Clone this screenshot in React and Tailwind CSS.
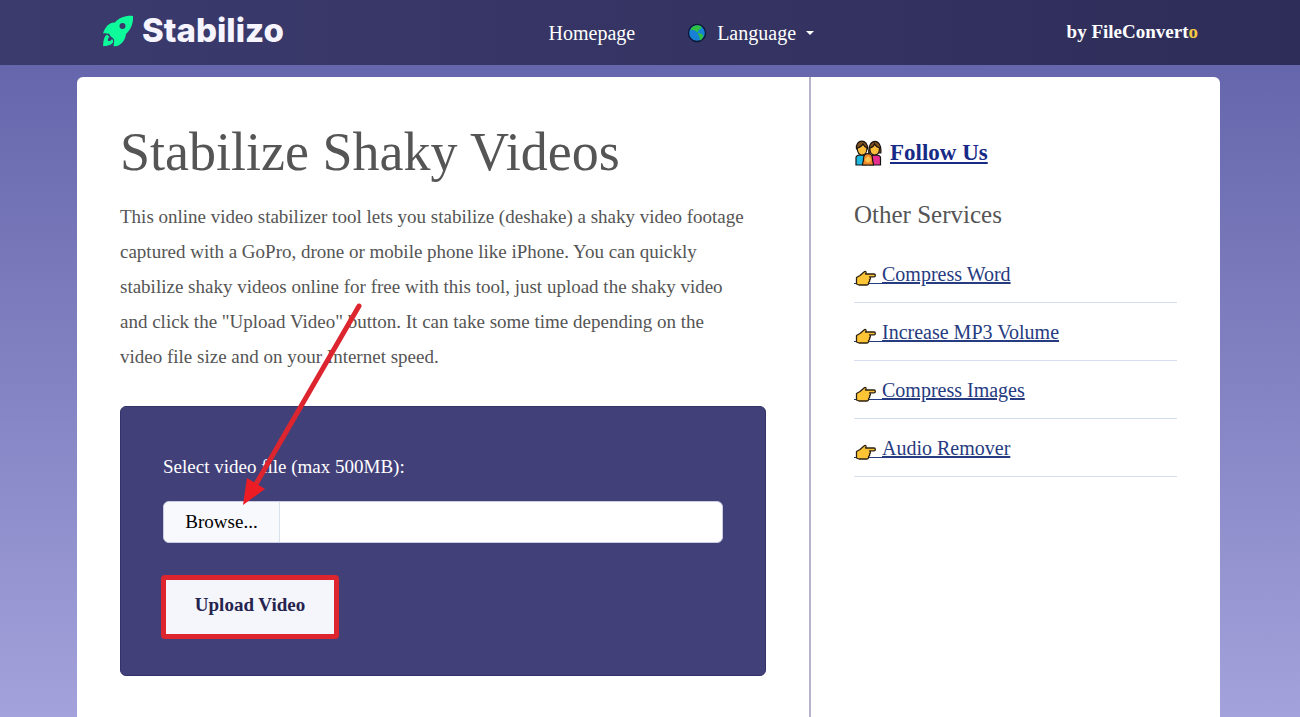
const services = ["Compress Word", "Increase MP3 Volume", "Compress Images", "Audio Remover"];

function RocketLogo() {
  return (
    <svg viewBox="0 0 32 32" className="h-8 w-8 shrink-0" aria-hidden="true">
      <path
        fill="#0dfb9a"
        fillRule="evenodd"
        d="M31 1C24 .3 17.500 2.500 13 7.500C8 7 3.500 11 1 18.500C3 17.800 4.500 18.300 7 18.800C8 20.500 9 22 11 23.200C12.500 24.300 12.500 26 11.500 31C14.500 31.500 16 31 18 29.500C21.500 27 23.500 23.500 24 19C29 14.500 31.500 8 31 1ZM20.500 8A3 3 0 1 1 20.500 14A3 3 0 1 1 20.500 8Z"
      />
      <path
        fill="#0dfb9a"
        d="M5 19.500C1.500 22 1.300 27 1.200 31.200C5.500 31 9.500 30 11 27.500C11.500 26 11 24.800 9.800 24C9 26 7.500 26.500 6 25.800C5.500 24.500 6 23 7.500 22Z"
      />
    </svg>
  );
}

function Globe() {
  return (
    <svg viewBox="0 0 20 20" className="h-5 w-5" aria-hidden="true">
      <circle cx="10" cy="10" r="8.500" fill="#1681d6" stroke="#0b1633" strokeWidth="1.300" />
      <path fill="#2fc043" d="M4.500 4.800C7 2 11.500 1.500 14.500 3.500L14 6L12 6.500L10.500 9.500L8 7.500L5.500 7L3.500 7.500Z" />
      <path fill="#2fc043" d="M10.500 10L14 10.500L16.500 12.500L15 16L13 17.500L12.500 14Z" />
    </svg>
  );
}

function Family() {
  return (
    <svg viewBox="0 0 28 26" className="h-[26px] w-7 shrink-0" aria-hidden="true" stroke="#171310" strokeWidth="1.200">
      <path fill="#20b9df" d="M2 25V17.500C2 14 12 14 13 18V25Z" />
      <path fill="#e72e91" d="M15 25V18C16 14 26.500 14 26.500 17.500V25Z" />
      <path fill="#81501f" d="M2.500 9C1 -1.500 14.500 -1.500 13.500 9Z" />
      <path fill="#81501f" d="M14.800 13C13.500 -2.500 28.500 -2.500 26.800 13Z" />
      <path fill="#fbbd3c" d="M3.200 8C6 7.500 8 6 9 4C10 6 11.500 7.500 13 8C13 17.500 3.200 17.500 3.200 8Z" />
      <path fill="#fbbd3c" d="M15.800 8C18 7.500 20 6 20.500 4C21.500 6 23.500 7.500 25.500 8C25.500 17.500 15.800 17.500 15.800 8Z" />
      <path fill="#f08a28" d="M8.500 25C8.500 22.500 9.500 22 9.500 18.500C9.500 12 18.500 12 18.500 18.500C18.500 22 19.500 22.500 19.500 25Z" />
      <path fill="#fbc352" stroke="none" d="M11 19L14 16L17 19C17 23.500 11 23.500 11 19Z" />
    </svg>
  );
}

function PointingHand() {
  return (
    <svg viewBox="0 0 28 16" className="absolute bottom-0.5 left-0 h-4 w-7" aria-hidden="true">
      <path d="M0 13.500H28" stroke="#263b80" />
      <path
        fill="#fdc536"
        stroke="#2b2111"
        strokeWidth="1.300"
        strokeLinejoin="round"
        d="M2.500 7.500L6 5.500L10 2C11 1 12.500 1.500 12 3L11.500 4H20C21.800 4 21.800 6.800 20 6.800H15.500C17 8 16.500 9.500 15.500 9.700C16 11 15.500 12 14.500 12.300C15 14 14 15 12.500 15H5L2.500 14Z"
      />
    </svg>
  );
}

function Arrow() {
  return (
    <svg
      viewBox="0 0 122 206"
      className="pointer-events-none absolute -top-[105px] left-[121px] h-[206px] w-[122px]"
      aria-hidden="true"
    >
      <path d="M117 4L14 182" stroke="#dc252f" strokeWidth="5" strokeLinecap="round" />
      <path d="M1 203L5 176L23 187Z" fill="#ed1c24" />
    </svg>
  );
}

function Header() {
  return (
    <header className="flex h-[65px] items-center justify-between bg-linear-to-r from-[#3c3b6e] to-[#2e2d59] px-[102px] text-white">
      <a href="#" className="flex items-center gap-2 pb-1 font-['Inter',sans-serif] text-[33px] font-extrabold text-[#f5f4ff]">
        <RocketLogo />
        Stabilizo
      </a>
      <nav className="flex items-center gap-[52px] pl-3 text-xl">
        <a href="#">Homepage</a>
        <button type="button" className="flex items-center gap-[10px]">
          <Globe />
          <span>Language</span>
          <span className="border-x-4 border-t-4 border-x-transparent border-t-white" />
        </button>
      </nav>
      <a href="#" className="font-bold">
        by FileConvert<span className="text-[#f2c744]">o</span>
      </a>
    </header>
  );
}

function UploadForm() {
  return (
    <form className="relative mt-8 rounded-md border border-[#343369] bg-[#424079] px-[42px] pt-11 pb-9 text-white">
      <label htmlFor="video" className="block leading-8">
        Select video file (max 500MB):
      </label>
      <div className="relative mt-[18px]">
        <input
          id="video"
          type="file"
          className="block h-[42px] w-full rounded-md border border-[#c9cde3] bg-white text-transparent file:h-10 file:w-[116px] file:border-r file:border-[#dbe1e9] file:bg-[#f8f9fc] file:text-transparent"
        />
        <span
          className="pointer-events-none absolute inset-y-0 left-0 flex w-[117px] items-center justify-center text-black"
          aria-hidden="true"
        >
          Browse...
        </span>
      </div>
      <button
        type="submit"
        className="mt-8 -ml-[2px] h-16 w-[178px] rounded-sm border-[5px] border-[#dc252f] bg-[#f5f6fc] pb-1 font-bold text-[#26244f]"
      >
        Upload Video
      </button>
      <Arrow />
    </form>
  );
}

export default function App() {
  return (
    <div className="flex min-h-screen flex-col bg-linear-to-b from-[#6060a7] to-[#a3a2dc] font-['Liberation_Serif',serif] text-[19px]">
      <Header />
      <div className="flex grow pt-3 pr-20 pl-[77px]">
        <div className="grid grow grid-cols-[734fr_409fr] rounded-t-md bg-white text-[#555]">
          <main className="border-r-2 border-[#b5b4ca] px-[43px] pt-11">
            <h1 className="text-[54px] leading-[62px]">Stabilize Shaky Videos</h1>
            <p className="mt-4 pr-4 leading-[35px]">
              This online video stabilizer tool lets you stabilize (deshake) a shaky video footage captured with a
              GoPro, drone or mobile phone like iPhone. You can quickly stabilize shaky videos online for free with
              this tool, just upload the shaky video and click the "Upload Video" button. It can take some time
              depending on the video file size and on your Internet speed.
            </p>
            <UploadForm />
          </main>
          <aside className="px-[43px] pt-[60px]">
            <a href="#" className="flex items-center gap-2 text-[23px] leading-8 font-bold text-[#172a86] underline">
              <Family />
              Follow Us
            </a>
            <h2 className="mt-[30px] text-[25px] leading-8">Other Services</h2>
            <ul className="mt-[14px]">
              {services.map((service) => (
                <li key={service} className="border-b border-[#d5dfef] pt-[15px] pb-[14px] text-xl leading-7">
                  <a href="#" className="relative block w-fit pl-7 text-[#263b80] underline">
                    {service}
                    <PointingHand />
                  </a>
                </li>
              ))}
            </ul>
          </aside>
        </div>
      </div>
    </div>
  );
}
